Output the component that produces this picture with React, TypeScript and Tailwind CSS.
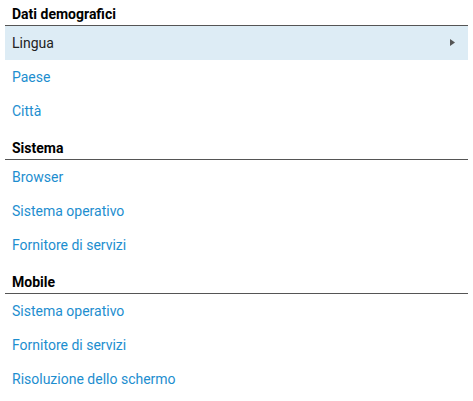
import React from "react";

const sections = [
  { title: "Dati demografici", items: ["Lingua", "Paese", "Città"] },
  { title: "Sistema", items: ["Browser", "Sistema operativo", "Fornitore di servizi"] },
  { title: "Mobile", items: ["Sistema operativo", "Fornitore di servizi", "Risoluzione dello schermo"] },
];

export default function App() {
  return (
    <div className="w-[473px] h-[401px] bg-white px-[5px] overflow-hidden" style={{ fontFamily: "Roboto, 'Liberation Sans', sans-serif" }}>
      {sections.map((s, si) => (
        <div key={si} className={si === 0 ? "" : "mt-[6px]"}>
          <div className="h-[26px] flex items-end pb-[4px] pl-[7px] border-b border-[#555555] text-[14px] font-bold text-black leading-none">
            {s.title}
          </div>
          {s.items.map((it, ii) => {
            const active = si === 0 && ii === 0;
            return (
              <div
                key={ii}
                className={
                  "h-[34px] flex items-center pl-[7px] pr-[13px] text-[14px] " +
                  (active ? "bg-[#ddecf5] text-[#222222]" : "text-[#1d8ecf]")
                }
              >
                <span className="flex-1">{it}</span>
                {active && (
                  <svg width="5" height="7" viewBox="0 0 5 7" className="mt-[-1px]">
                    <path d="M0 0 L5 3.5 L0 7 Z" fill="#555555" />
                  </svg>
                )}
              </div>
            );
          })}
        </div>
      ))}
    </div>
  );
}
